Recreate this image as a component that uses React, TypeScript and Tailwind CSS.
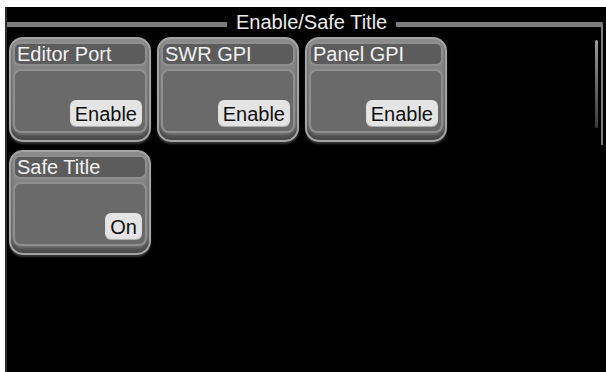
const font = { fontFamily: '"Liberation Sans", Arial, sans-serif' };

type Item = { name: string; value: string };

const items: Item[] = [
  { name: "Editor Port", value: "Enable" },
  { name: "SWR GPI", value: "Enable" },
  { name: "Panel GPI", value: "Enable" },
  { name: "Safe Title", value: "On" },
];

function Card({ item }: { item: Item }) {
  return (
    <div className="flex h-[105px] w-[142px] flex-col rounded-[14px] border-2 border-[#a3a3a3] bg-gradient-to-b from-[#8a8a8a] to-[#737373] px-[2px] pt-[3px] pb-[7px] shadow-[inset_0_-5px_3px_rgba(0,0,0,0.35),0_2px_2px_rgba(90,90,90,0.6)]">
      <div className="flex h-[24px] items-center rounded-[7px] border-2 border-[#8e8e8e] bg-[#5c5c5c] pl-[2px] text-[20px] leading-none text-[#f2f2f2]">
        {item.name}
      </div>
      <div className="mt-[3px] flex flex-1 items-end justify-end rounded-[8px] border-2 border-[#8f8f8f] bg-[#6a6a6a] pr-[3px] pb-[4px]">
        <div className="flex h-[27px] items-center rounded-[6px] bg-[#e4e4e4] px-[5px] text-[20px] leading-none text-[#111] shadow-[inset_0_-1px_1px_rgba(0,0,0,0.25)]">
          {item.value}
        </div>
      </div>
    </div>
  );
}

export default function App() {
  return (
    <div className="h-[372px] w-[606px] overflow-hidden bg-white pt-[7px] pl-[5px]" style={font}>
      <div className="flex h-[365px] w-[601px] border-l-2 border-[#2c2c2c] bg-black">
        <div className="w-[588px]">
          <div className="flex h-[30px] items-start">
            <div className="mt-[15px] h-[5px] w-[220px] bg-[#7c7c7c]" />
            <div className="ml-[9px] mt-[5px] text-[20px] leading-[20px] text-[#ececec]">Enable/Safe Title</div>
            <div className="ml-[9px] mt-[15px] h-[5px] flex-1 bg-[#7c7c7c]" />
          </div>
          <div className="grid grid-cols-[142px_142px_142px] gap-x-[6px] gap-y-[8px] pl-[2px]">
            {items.map((it) => (
              <Card key={it.name} item={it} />
            ))}
          </div>
        </div>
        <div className="w-[8px]">
          <div className="mt-[15px] flex h-[123px] rounded-tr-[2px] border-t-[5px] border-r-[2px] border-[#7c7c7c]">
            <div className="mt-[13px] h-[88px] w-[3px] rounded-full bg-gradient-to-b from-[#9a9a9a] to-[#3a3a3a]" />
          </div>
        </div>
      </div>
    </div>
  );
}
